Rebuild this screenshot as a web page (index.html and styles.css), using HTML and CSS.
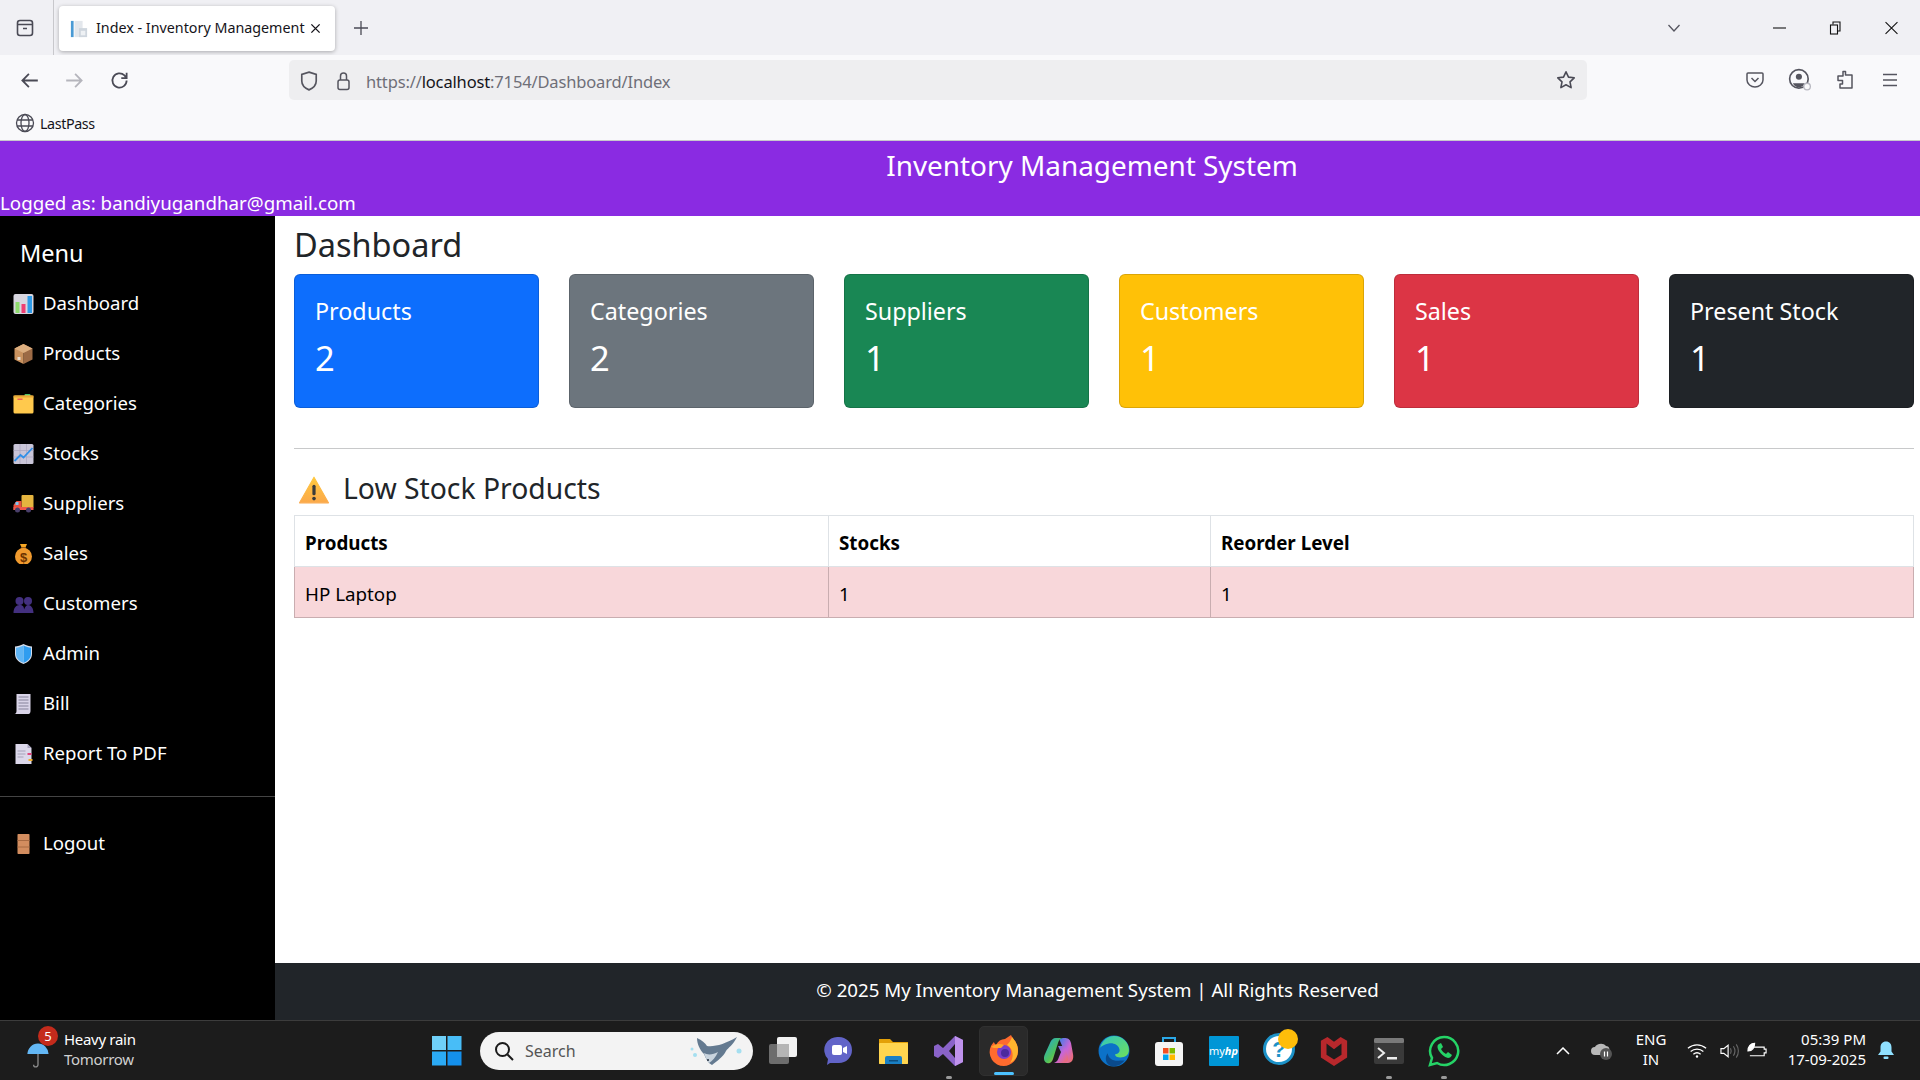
FILE: index.html
```html
<!DOCTYPE html>
<html lang="en">
<head>
<meta charset="utf-8">
<title>Index - Inventory Management</title>
<link rel="stylesheet" href="styles.css">
</head>
<body>
<div class="tabbar">
  <div class="tabside">
    <svg class="ic20" viewBox="0 0 20 20" fill="none" stroke="#4a4a55" stroke-width="1.6"><rect x="2.5" y="2.5" width="15" height="15" rx="2.5"/><path d="M2.5 6.5h15M8 10.5h4"/></svg>
  </div>
  <div class="tab">
    <svg class="tabfav" viewBox="0 0 20 20"><rect x="1" y="1" width="3" height="18" fill="#4a9ad4"/><rect x="5" y="1" width="9" height="18" fill="#e3e7ec"/><rect x="10" y="9" width="9" height="10" fill="#cfd6de"/><rect x="12" y="12" width="5" height="5" fill="#eef1f4"/></svg>
    <span class="tabtitle">Index - Inventory Management</span>
    <svg class="tabclose" viewBox="0 0 12 12" stroke="#15141a" stroke-width="1.5"><path d="M1.5 1.5l9 9M10.5 1.5l-9 9"/></svg>
  </div>
  <svg class="tabplus" viewBox="0 0 14 14" stroke="#4a4a55" stroke-width="1.3"><path d="M7 0v14M0 7h14"/></svg>
  <div class="spring"></div>
  <svg class="tablist" viewBox="0 0 14 10" fill="none" stroke="#55555f" stroke-width="1.3"><path d="M1.5 2l5.5 6 5.5-6"/></svg>
  <div class="winbtns">
    <svg class="winb" viewBox="0 0 12 12" stroke="#111" stroke-width="1"><path d="M0 6h12"/></svg>
    <svg class="winb" viewBox="0 0 12 14" fill="none" stroke="#111" stroke-width="1.1"><rect x="1" y="4" width="7" height="9"/><path d="M3.5 3.5V1h7v9H8.5"/></svg>
    <svg class="winb" viewBox="0 0 12 12" stroke="#111" stroke-width="1"><path d="M.5.5l11 11M11.5.5l-11 11"/></svg>
  </div>
</div>

<div class="toolbar">
  <div class="navbtns">
    <svg class="ic18" viewBox="0 0 16 16" fill="none" stroke="#4a4a55" stroke-width="1.5"><path d="M15 8H2M7.500 2.500L2 8l5.500 5.500"/></svg>
    <svg class="ic18" viewBox="0 0 16 16" fill="none" stroke="#b5b5bc" stroke-width="1.5"><path d="M1 8h13M8.500 2.500L14 8l-5.500 5.500"/></svg>
    <svg class="ic18" viewBox="0 0 16 16" fill="none" stroke="#4a4a55" stroke-width="1.500"><path d="M14 1.500v4.500H9.500M14 8a6 6 0 1 1-1.800-4.300L14 6"/></svg>
  </div>
  <div class="urlbar">
    <svg class="urlshield" viewBox="0 0 16 18" fill="none" stroke="#55555f" stroke-width="1.5"><path d="M8 1l6.500 2v6c0 4-3 6.500-6.500 8C4.500 15.500 1.500 13 1.500 9V3z"/></svg>
    <svg class="urllock" viewBox="0 0 14 20" fill="none" stroke="#55555f" stroke-width="1.5"><rect x="1.500" y="9" width="11" height="9.500" rx="2"/><path d="M4 9V5a3 3 0 0 1 6 0v4"/></svg>
    <span class="url">https://<b class="urlhost">localhost</b>:7154/Dashboard/Index</span>
    <svg class="urlstar" viewBox="0 0 20 20" fill="none" stroke="#4a4a55" stroke-width="1.6"><path d="M10 1.800l2.500 5.300 5.700.7-4.200 4 1.100 5.800L10 14.800l-5.100 2.800L6 11.800l-4.200-4 5.700-.7z" stroke-linejoin="round"/></svg>
  </div>
  <div class="toolicons">
    <svg class="ic20" viewBox="0 0 20 20" fill="none" stroke="#55555f" stroke-width="1.500"><path d="M3 3h14a1 1 0 0 1 1 1v6c0 4-4 7-8 7s-8-3-8-7V4a1 1 0 0 1 1-1z"/><path d="M6.500 8l3.500 3.500L13.500 8"/></svg>
    <svg class="ic24" viewBox="0 0 22 22"><circle cx="10" cy="10" r="8.500" fill="none" stroke="#55555f" stroke-width="1.500"/><circle cx="10" cy="8" r="2.800" fill="#55555f"/><path d="M4.500 14h11a6 6 0 0 1-11 0z" fill="#55555f"/><circle cx="17.500" cy="17" r="3" fill="#f9f9fb" stroke="#b8b8c0" stroke-width="1.200"/></svg>
    <svg class="ic20" viewBox="0 0 20 20" fill="none" stroke="#55555f" stroke-width="1.500"><path d="M8 1.500h2.500V5H17v13H5v-4h2.500v-3.500H3V6h5z" stroke-linejoin="round"/></svg>
    <svg class="ic20 menuic" viewBox="0 0 20 20" fill="none" stroke="#55555f" stroke-width="1.500"><path d="M3 4.500h14M3 10h14M3 15.500h14"/></svg>
  </div>
</div>

<div class="bookmarks">
  <svg class="ic20" viewBox="0 0 20 20" fill="none" stroke="#4a4a55" stroke-width="1.300"><circle cx="10" cy="10" r="8.500"/><ellipse cx="10" cy="10" rx="4" ry="8.500"/><path d="M2 7h16M2 13h16"/></svg>
  <span class="bmtext">LastPass</span>
</div>

<header class="apphead">
  <div class="apptitle">Inventory Management System</div>
  <div class="logged">Logged as: bandiyugandhar@gmail.com</div>
</header>

<div class="appbody">
  <nav class="sidebar">
    <div class="menuhead">Menu</div>
    <a class="navitem"><svg class="navic" viewBox="0 0 20 20"><rect width="20" height="20" rx="2" fill="#d8d6e0"/><rect x="2" y="8" width="4" height="11" fill="#8fdc6e"/><rect x="8" y="10" width="4" height="9" fill="#ef3e73"/><rect x="14" y="2" width="4.500" height="17" fill="#2f9be8"/></svg>Dashboard</a>
    <a class="navitem"><svg class="navic" viewBox="0 0 20 20"><path d="M10 0l9 4.500v11L10 20z" fill="#9c6a45"/><path d="M10 0L1 4.500v11l9 4.500z" fill="#c9925f"/><path d="M1 4.500L10 9l9-4.500L10 0z" fill="#dcae7f"/><rect x="4" y="13" width="3" height="3" fill="#e8dcd0"/></svg>Products</a>
    <a class="navitem"><svg class="navic" viewBox="0 0 20 20"><rect x="11" y="0" width="6" height="4" rx="1" fill="#4fc46a"/><rect y="1.500" width="20" height="18" rx="1.500" fill="#ffc94d"/><rect x="0" y="1.500" width="20" height="2" fill="#e8a838"/><rect x="4" y="4.500" width="5" height="1.500" fill="#ef5a5a"/></svg>Categories</a>
    <a class="navitem"><svg class="navic" viewBox="0 0 20 20"><rect width="20" height="20" rx="1.500" fill="#c9c5d8"/><path d="M0 6.500h20M0 13h20M6.500 0v20M13 0v20" stroke="#aaa5bf" stroke-width=".7"/><path d="M1 17l6-6 3 2.500L19 4" fill="none" stroke="#2f8fe8" stroke-width="1.800"/></svg>Stocks</a>
    <a class="navitem"><svg class="navic" viewBox="0 0 20 20"><rect x="8" y="1" width="12" height="13" rx="1" fill="#e5b53f"/><path d="M0 14l0-3 3-4h5v9H0z" fill="#e8503f"/><rect x="2" y="8" width="3" height="3" fill="#7fc4f0"/><rect y="13" width="20" height="3" fill="#f0574a"/><circle cx="4" cy="16" r="2.500" fill="#4a3f6b"/><circle cx="15" cy="16" r="2.500" fill="#4a3f6b"/></svg>Suppliers</a>
    <a class="navitem"><svg class="navic" viewBox="0 0 20 20"><path d="M6.500 0h7l-1.500 3.500h-4z" fill="#f5a623"/><rect x="7.500" y="3.500" width="5" height="1.800" fill="#b86a1a"/><circle cx="10" cy="12.500" r="8.500" fill="#f09a2e"/><text class="dollar" x="10" y="17.500" text-anchor="middle">$</text></svg>Sales</a>
    <a class="navitem"><svg class="navic" viewBox="0 0 20 20" fill="#43307f"><circle cx="6" cy="7" r="4"/><circle cx="14.500" cy="7" r="4"/><path d="M0 19c0-5 2.500-8 6-8s4.500 2 4.500 4 1-4 4-4 5.500 3 5.500 8z"/></svg>Customers</a>
    <a class="navitem"><svg class="navic" viewBox="0 0 20 20"><path d="M10 0c3 1.500 6 2.500 8.500 2.500V10c0 5-4 8.500-8.500 10C5.500 18.500 1.500 15 1.500 10V2.500C4 2.500 7 1.500 10 0z" fill="#d5dcea"/><path d="M10 1.500c2.500 1.200 5 2 7.500 2.200V10c0 4.300-3.500 7.400-7.500 8.800z" fill="#2f9df0"/><path d="M10 1.500C7.500 2.700 5 3.500 2.500 3.700V10c0 4.300 3.500 7.400 7.500 8.800z" fill="#5fb5f5"/></svg>Admin</a>
    <a class="navitem"><svg class="navic" viewBox="0 0 20 20"><path d="M3 0h14v17c0 2-1 3-2 3H1c1 0 2-1 2-3z" fill="#d9d4e8"/><path d="M5 3h10M5 6h10M5 9h10M5 12h10M5 15h10" stroke="#85829a" stroke-width="1"/></svg>Bill</a>
    <a class="navitem"><svg class="navic" viewBox="0 0 20 20"><path d="M2 0h12l4 4v16H2z" fill="#dcd8ea"/><path d="M14 0l4 4h-4z" fill="#aaa5c0"/><path d="M4 7h8M4 10h8M4 13h6" stroke="#a5a2b8" stroke-width="1.200"/><rect x="14" y="9" width="4" height="2" fill="#e0457b"/><rect x="15" y="15" width="4" height="2" fill="#f0b030"/></svg>Report To PDF</a>
    <div class="navrule"></div>
    <a class="navitem"><svg class="navic" viewBox="0 0 20 20"><rect x="4" y="0" width="12" height="20" rx=".8" fill="#d38d5f"/><path d="M4 6.500h12M4 13h12" stroke="#a86a42" stroke-width="1"/></svg>Logout</a>
  </nav>

  <div class="maincol">
    <main class="main">
      <h1 class="pagetitle">Dashboard</h1>
      <div class="cards">
        <div class="card c-blue"><div class="cardlabel">Products</div><div class="cardnum">2</div></div>
        <div class="card c-gray"><div class="cardlabel">Categories</div><div class="cardnum">2</div></div>
        <div class="card c-green"><div class="cardlabel">Suppliers</div><div class="cardnum">1</div></div>
        <div class="card c-yellow"><div class="cardlabel">Customers</div><div class="cardnum">1</div></div>
        <div class="card c-red"><div class="cardlabel">Sales</div><div class="cardnum">1</div></div>
        <div class="card c-dark"><div class="cardlabel">Present Stock</div><div class="cardnum">1</div></div>
      </div>
      <hr class="rule">
      <h2 class="sectitle">
        <svg class="warn" viewBox="0 0 28 26"><defs><linearGradient id="wg" x1="0" y1="0" x2="0" y2="1"><stop offset="0" stop-color="#ffc83d"/><stop offset="1" stop-color="#fba94b"/></linearGradient></defs><path d="M14 1L27.500 25h-27z" fill="url(#wg)" stroke="url(#wg)" stroke-linejoin="round"/><rect x="12.500" y="8" width="3" height="10" rx="1.500" fill="#3a3a3a"/><circle cx="14" cy="21" r="1.700" fill="#3a3a3a"/></svg>
        Low Stock Products
      </h2>
      <table class="stock">
        <thead><tr><th class="col1">Products</th><th class="col2">Stocks</th><th>Reorder Level</th></tr></thead>
        <tbody><tr class="danger"><td>HP Laptop</td><td>1</td><td>1</td></tr></tbody>
      </table>
    </main>
    <footer class="foot">© 2025 My Inventory Management System | All Rights Reserved</footer>
  </div>
</div>

<div class="taskbar">
  <div class="weather">
    <svg class="umbrella" viewBox="0 0 26 34"><path d="M1 16a12 12 0 0 1 24 0z" fill="#63b7f5"/><path d="M13 16v12a2.500 2.500 0 0 1-5 0" fill="none" stroke="#8a8a8a" stroke-width="1.500"/></svg>
    <span class="wbadge">5</span>
    <div class="wtext"><div class="wmain">Heavy rain</div><div class="wsub">Tomorrow</div></div>
  </div>
  <div class="tbapps">
    <div class="tbicon"><svg class="ic30" viewBox="0 0 30 30"><rect width="14" height="14" fill="#6fd0f8"/><rect x="15.500" width="14" height="14" fill="#48bdf7"/><rect y="15.500" width="14" height="14" fill="#2baaf5"/><rect x="15.500" y="15.500" width="14" height="14" fill="#1490ec"/></svg></div>
    <div class="search">
      <svg class="ic20" viewBox="0 0 20 20" fill="none" stroke="#1a1a1a" stroke-width="2"><circle cx="8.500" cy="8.500" r="6.500"/><path d="M13.500 13.500L19 19"/></svg>
      <span class="searchtext">Search</span>
      <svg class="manta" viewBox="0 0 60 30"><path d="M10 2c5 2 8 5 10 8 8 1 18-2 30-9-4 8-9 11-11 14-3 6-9 10-14 14-4-2-6-6-8-11C13 14 10 8 10 2z" fill="#647a90"/><path d="M17 17c3 2 9 2 14-1-2 5-6 9-9 11-2-3-4-6-5-10z" fill="#c9d4de"/><circle cx="21" cy="24" r="1" fill="#1c2a38"/><circle cx="5" cy="13" r="1.500" fill="#a5dff0"/><circle cx="8" cy="19" r="2" fill="#a5dff0"/><circle cx="52" cy="15" r="2.500" fill="#a5dff0"/></svg>
    </div>
    <div class="tbicon"><svg class="ic30" viewBox="0 0 30 30"><rect x="0" y="8" width="20" height="20" rx="2" fill="#6d6d6d"/><rect x="8" y="1" width="20" height="20" rx="2" fill="#f2f2f2"/><rect x="8" y="8" width="12" height="13" fill="#b5b5b5"/></svg></div>
    <div class="tbicon"><svg class="ic30" viewBox="0 0 30 30"><path d="M15 1a13 13 0 0 1 0 26H6l-3 2 1-6A13 13 0 0 1 15 1z" fill="#6264c8"/><rect x="8" y="9" width="10" height="10" rx="2" fill="#fff"/><path d="M19 12l4-2v8l-4-2z" fill="#fff"/></svg></div>
    <div class="tbicon"><svg class="ic30" viewBox="0 0 30 30"><path d="M0 3h11l3 3h15v21a1 1 0 0 1-1 1H1a1 1 0 0 1-1-1z" fill="#e3a008"/><rect y="7" width="29" height="21" rx="1" fill="#ffd54f"/><path d="M6 22a2 2 0 0 1 2-2h13a2 2 0 0 1 2 2v6H6z" fill="#1a80c4"/><rect x="10" y="24" width="9" height="1.500" fill="#0d4f80"/></svg></div>
    <div class="tbicon tbrun"><svg class="ic30" viewBox="0 0 30 30"><path d="M21 0l8 4v22l-8 4L9 18l-5 4-4-2V10l4-2 5 4z" fill="#8a63c9"/><path d="M21 0l8 4v22l-8 4z" fill="#bf92ec"/><path d="M21 8l-6 7 6 7z" fill="#1c1c1c"/></svg></div>
    <div class="tbslot"><div class="tbactive"><svg class="ic32" viewBox="0 0 32 32"><path d="M16 31A14 14 0 0 1 3 11c1-2 2-3 3-4 0 1 1 2 2 3 2-4 5-6 9-6l6-4c1 3 5 6 5 8 2 3 2 6 2 9A15 15 0 0 1 16 31z" fill="#ff6b2e"/><path d="M24 2c3 4 6 7 6 14a14 14 0 0 1-8 12c4-5 4-14-3-18 2-2 4-5 5-8z" fill="#ffb52e"/><circle cx="16" cy="17" r="7" fill="#7b3fc9"/><circle cx="17" cy="18" r="4" fill="#4a2a9e"/><path d="M3 12c4-3 9-4 13-2l-3 3H6z" fill="#ffa32e"/></svg><span class="runbar"></span></div></div>
    <div class="tbicon"><svg class="ic30" viewBox="0 0 30 30"><defs><linearGradient id="cp1" x1="0" y1="0" x2="1" y2="1"><stop offset="0" stop-color="#1fa7e0"/><stop offset=".55" stop-color="#4fc25a"/><stop offset="1" stop-color="#f5c02a"/></linearGradient><linearGradient id="cp2" x1="0" y1="0" x2="1" y2="1"><stop offset="0" stop-color="#3f7ee8"/><stop offset=".5" stop-color="#c866d8"/><stop offset="1" stop-color="#f5705a"/></linearGradient></defs><path d="M20 2c4 0 6 1 7 5l2 11c1 5-1 9-5 9h-7l3-3c2-2 1-6 0-10L16 5c-1-2 1-3 4-3z" fill="url(#cp2)"/><path d="M12 2h7c-3 0-4 2-5 5L9 23c-1 3-3 5-6 4C0 26-1 22 1 18L6 7c1-3 3-5 6-5z" fill="url(#cp1)"/><path d="M14 10h7l3 11c1 4-2 6-6 6h-8c3-1 4-3 5-6l2-5z" fill="url(#cp2)"/></svg></div>
    <div class="tbicon"><svg class="ic32" viewBox="0 0 30 30"><defs><linearGradient id="eg" x1="0" y1="0" x2="1" y2="1"><stop offset="0" stop-color="#30c5c0"/><stop offset="1" stop-color="#6fe05a"/></linearGradient></defs><circle cx="15" cy="15" r="14.500" fill="#0c72c8"/><path d="M2 12C4 5 9 1 15 1c8 0 14 6 14 13 0 5-4 7-8 7-3 0-5-1-5-3 3 0 5-2 4-5-1-4-6-6-10-5-4 1-6 2-8 4z" fill="url(#eg)"/><path d="M12 29C7 27 6 21 9 17c1 5 5 8 12 7 2 0 3 0 4 0-3 4-8 6-13 5z" fill="#0a4a8c"/></svg></div>
    <div class="tbicon"><svg class="ic30" viewBox="0 0 30 30"><path d="M9 7V2h12v5" fill="none" stroke="#2aa8e8" stroke-width="2"/><rect x="1" y="6" width="28" height="24" rx="3" fill="#f5f5f5"/><rect x="9" y="12" width="5.500" height="5.500" fill="#f25022"/><rect x="15.500" y="12" width="5.500" height="5.500" fill="#7fba00"/><rect x="9" y="18.500" width="5.500" height="5.500" fill="#00a4ef"/><rect x="15.500" y="18.500" width="5.500" height="5.500" fill="#ffb900"/></svg></div>
    <div class="tbicon"><div class="myhp">my<i class="hp">hp</i></div></div>
    <div class="tbicon"><svg class="help" viewBox="0 0 36 36"><circle cx="16" cy="20" r="14.500" fill="#fff" stroke="#1c92c8" stroke-width="3"/><text class="qmark" x="16" y="28" text-anchor="middle">?</text><circle cx="25" cy="10" r="10" fill="#ffbd0a"/></svg></div>
    <div class="tbicon"><svg class="ic30" viewBox="0 0 30 32"><path d="M1 5l7-4 7 5 7-5 7 4v18l-14 9-14-9z" fill="#b8282c"/><path d="M7 8l8 6 8-6v12l-8 5-8-5z" fill="#1c1c1c"/></svg></div>
    <div class="tbicon tbrun"><svg class="ic30" viewBox="0 0 30 30"><rect y="2" width="30" height="26" rx="2" fill="#3a3a3a"/><rect y="2" width="30" height="5" rx="1.500" fill="#7a7a7a"/><path d="M4 12l6 5-6 5" fill="none" stroke="#eee" stroke-width="2"/><rect x="13" y="21" width="10" height="2.500" fill="#eee"/></svg></div>
    <div class="tbicon tbrun"><svg class="ic32" viewBox="0 0 32 32"><path d="M16 2a14 14 0 1 1-7 26l-7 2 2-7A14 14 0 0 1 16 2z" fill="none" stroke="#25d366" stroke-width="2.500"/><path d="M11 9c-2 1-2 4 0 7s5 6 9 7c2 0 3-1 4-3l-4-3-2 2c-2-1-4-3-5-5l2-2-2-4z" fill="#25d366"/></svg></div>
  </div>
  <div class="tray">
    <svg class="trchev" viewBox="0 0 14 8" fill="none" stroke="#fff" stroke-width="1.500"><path d="M1 7l6-6 6 6"/></svg>
    <svg class="trcloud" viewBox="0 0 22 20"><path d="M4 14a4 4 0 0 1 0-8c1-3 8-5 11-1 3 0 4 3 3 5v4z" fill="#b8b8b8"/><circle cx="15" cy="13" r="6" fill="#555"/><path d="M13.500 10.500v5M16.500 10.500v5" stroke="#fff" stroke-width="1.200"/></svg>
    <div class="trlang">ENG<br>IN</div>
    <svg class="trwifi" viewBox="0 0 22 16" fill="none" stroke="#fff" stroke-width="1.400"><path d="M1 5c6-5 14-5 20 0M4 8.500c4-3.500 10-3.500 14 0M7 11.500c2.500-2 5.500-2 8 0"/><circle cx="11" cy="14" r="1.300" fill="#fff" stroke="none"/></svg>
    <svg class="trsound" viewBox="0 0 22 16" fill="none" stroke="#fff" stroke-width="1.200"><path d="M1 5.500h3L8.500 2v12L4 10.500H1z"/><path d="M11 5c1 2 1 4 0 6M14 3c2 3 2 7 0 10M17 1c3 4 3 10 0 14" stroke="#666"/></svg>
    <svg class="trbatt" viewBox="0 0 22 18" fill="none" stroke="#fff" stroke-width="1.200"><path d="M7 5h11v2h2v4h-2v3H3"/><path d="M1 9c0-5 3-8 7-8 0 4-2 8-7 8z" fill="#fff"/></svg>
    <div class="trclock"><div>05:39 PM</div><div>17-09-2025</div></div>
    <svg class="trbell" viewBox="0 0 18 20" fill="#8fe0ff"><path d="M9 1c3.500 0 5.500 2.500 5.500 6v4l2.500 3.500H1L3.500 11V7C3.500 3.500 5.500 1 9 1z"/><rect x="6.500" y="16" width="5" height="2.500" rx="1"/></svg>
  </div>
</div>
</body>
</html>
```
FILE: styles.css
```css
* { box-sizing: border-box; }
html, body { margin: 0; height: 100%; }
body {
  width: 1920px; height: 1080px; overflow: hidden;
  display: flex; flex-direction: column;
  font-family: "Noto Sans", "Open Sans", "Liberation Sans", sans-serif;
  font-size: 18.7px; color: #212529; background: #fff;
}
svg { display: block; flex: none; }
.ic18 { width: 18px; height: 18px; }
.ic20 { width: 20px; height: 20px; }
.ic24 { width: 24px; height: 24px; }
.ic30 { width: 30px; height: 30px; }
.ic32 { width: 32px; height: 32px; }

/* browser chrome */
.tabbar { height: 55px; background: #f0f0f4; display: flex; align-items: center; flex: none; }
.tabside { width: 54px; height: 55px; border-right: 1px solid #c8c8cc; display: flex; align-items: center; padding-left: 15px; }
.tab { margin: 2px 0 0 5px; width: 276px; height: 45px; background: #fff; border-radius: 4px; box-shadow: 0 1px 4px rgba(0,0,0,.3); display: flex; align-items: center; padding-left: 11px; }
.tabfav { width: 18px; height: 18px; margin-right: 8px; }
.tabtitle { font-size: 14.300px; color: #15141a; width: 206px; padding-bottom: 2px; white-space: nowrap; }
.tabclose { width: 11px; height: 11px; margin-left: 8px; }
.tabplus { width: 14px; height: 14px; margin-left: 19px; }
.spring { flex: 1; }
.tablist { width: 14px; height: 10px; margin-right: 92px; }
.winbtns { display: flex; gap: 43px; align-items: center; padding-right: 22px; }
.winb { width: 13px; height: 14px; }

.toolbar { height: 50px; background: #f9f9fb; display: flex; align-items: center; flex: none; }
.navbtns { display: flex; gap: 26px; padding-left: 20px; width: 289px; }
.navbtns .ic18 { width: 19px; height: 19px; }
.urlbar { width: 1298px; height: 40px; background: #eeeef0; border-radius: 5px; display: flex; align-items: center; padding: 2px 11px 0 11px; }
.urlshield { width: 18px; height: 20px; margin-right: 19px; }
.urllock { width: 15px; height: 20px; margin-right: 15px; margin-left: -1px; }
.url { flex: 1; font-size: 16.500px; letter-spacing: -.15px; color: #6f6f78; white-space: nowrap; }
.urlhost { font-weight: 400; color: #15141a; }
.urlstar { width: 20px; height: 20px; margin-top: -2px; }
.toolicons { display: flex; align-items: center; gap: 23px; margin-left: 158px; }
.menuic { margin-left: 2px; }

.bookmarks { height: 36px; background: #f9f9fb; border-bottom: 1px solid #c8c8cc; display: flex; align-items: center; gap: 5px; padding-left: 15px; padding-top: 1px; flex: none; }
.bmtext { font-size: 14.300px; letter-spacing: -.4px; color: #15141a; }

/* app header */
.apphead { height: 75px; background: #8a2be2; color: #fff; flex: none; }
.apptitle { text-align: center; font-size: 27.900px; line-height: 48px; padding-left: 264px; }
.logged { font-size: 18.750px; line-height: 27px; }

.appbody { flex: 1; display: flex; min-height: 0; }
.sidebar { width: 275px; background: #000; color: #fff; flex: none; }
.menuhead { font-size: 23.500px; line-height: 32px; padding: 21px 0 0 20px; margin-bottom: 8px; }
.navitem { display: flex; align-items: center; height: 50px; padding-left: 13px; gap: 9px; font-size: 18.600px; color: #fff; }
.navic { width: 21px; height: 20px; margin-top: 3px; }
.dollar { font: 700 13px "Liberation Sans", sans-serif; fill: #6b3200; }
.navrule { height: 1px; background: #444; margin: 19px 0 20px; }

.maincol { flex: 1; display: flex; flex-direction: column; min-width: 0; }
.main { flex: 1; padding: 8px 6px 0 19px; }
.pagetitle { margin: 0 0 8px; font-size: 32.500px; font-weight: 400; line-height: 42px; }
.cards { display: grid; grid-template-columns: repeat(6, 245px); column-gap: 30px; }
.card { height: 134px; border-radius: 6px; padding: 21px 20px; color: #fff; border: 1px solid rgba(0,0,0,.14); }
.cardlabel { font-size: 23.300px; line-height: 30px; }
.cardnum { font-size: 34.500px; line-height: 48px; margin-top: 8px; }
.c-blue { background: #0d6efd; }
.c-gray { background: #6c757d; }
.c-green { background: #198754; }
.c-yellow { background: #ffc107; }
.c-red { background: #dc3545; }
.c-dark { background: #212529; }
.rule { border: 0; border-top: 1px solid #c8c9ca; margin: 40px 0 0; }
.sectitle { margin: 21px 0 0; height: 45px; font-size: 28.300px; font-weight: 400; line-height: 36px; display: flex; align-items: flex-start; padding-left: 5px; gap: 14px; }
.warn { width: 30px; height: 28px; margin-top: 6px; }
.stock { width: 100%; border-collapse: collapse; font-size: 18.800px; table-layout: fixed; }
.stock th, .stock td { border: 1px solid #dee2e6; height: 51px; padding: 3px 10px 0; text-align: left; color: #000; }
.stock th { font-weight: 700; }
.col1 { width: 534px; }
.col2 { width: 382px; }
.danger td { background: #f8d7da; border-color: #c9adb0; }
.foot { height: 57px; background: #212529; color: #fff; display: flex; align-items: center; justify-content: center; font-size: 18.700px; padding-bottom: 4px; flex: none; }

/* taskbar */
.taskbar { height: 60px; background: #1c1c1c; border-top: 1px solid #3c3c3c; display: flex; align-items: center; flex: none; color: #fff; }
.weather { width: 419px; display: flex; align-items: center; padding-left: 25px; position: relative; }
.umbrella { width: 26px; height: 30px; margin-top: 8px; }
.wbadge { position: absolute; left: 38px; top: -3px; width: 20px; height: 20px; border-radius: 50%; background: #c42b1c; color: #fff; font-size: 13px; line-height: 20px; text-align: center; }
.wtext { margin-left: 13px; margin-bottom: 4px; }
.wmain { font-size: 15px; line-height: 20px; letter-spacing: -.3px; }
.wsub { font-size: 15px; line-height: 20px; letter-spacing: -.3px; color: #d0d0d0; }
.tbapps { display: flex; align-items: center; height: 58px; }
.tbicon, .tbslot { width: 55px; height: 50px; display: flex; align-items: center; justify-content: center; position: relative; }
.tbrun::after { content: ""; position: absolute; bottom: -3px; left: 50%; margin-left: -3px; width: 6px; height: 3px; border-radius: 2px; background: #9a9a9a; }
.tbactive { position: relative; width: 49px; height: 50px; display: flex; align-items: center; justify-content: center; background: #2a2a2a; border: 1px solid #303030; border-radius: 5px; }
.runbar { position: absolute; bottom: 0; left: 50%; margin-left: -10px; width: 20px; height: 3px; border-radius: 2px; background: #4cc2ff; }
.search { width: 273px; height: 38px; margin-left: 6px; margin-right: 3px; background: #f3f3f3; border-radius: 19px; display: flex; align-items: center; padding-left: 14px; }
.searchtext { flex: 1; margin-left: 11px; font-size: 16px; color: #555; }
.manta { width: 60px; height: 30px; margin-right: 6px; }
.myhp { width: 30px; height: 30px; background: #0096d6; border-radius: 1px; color: #fff; font-size: 11px; line-height: 30px; text-align: center; white-space: nowrap; }
.hp { font-style: italic; font-weight: 700; }
.help { width: 36px; height: 36px; margin: -8px 0 0 4px; }
.qmark { font: 700 22px "Liberation Sans", sans-serif; fill: #1c92c8; }
.tray { flex: 1; display: flex; align-items: center; height: 58px; padding-left: 85px; }
.trchev { width: 14px; height: 8px; }
.trcloud { width: 22px; height: 20px; margin-left: 21px; }
.trlang { width: 42px; margin-left: 17px; margin-bottom: 4px; font-size: 15px; line-height: 20px; text-align: center; }
.trwifi { width: 20px; height: 16px; margin-left: 15px; }
.trsound { width: 21px; height: 16px; margin-left: 13px; }
.trbatt { width: 21px; height: 18px; margin-left: 6px; }
.trclock { width: 96px; margin-left: 2px; margin-bottom: 4px; text-align: right; font-size: 15px; line-height: 20px; white-space: nowrap; }
.trbell { width: 18px; height: 21px; margin-left: 11px; }
```
